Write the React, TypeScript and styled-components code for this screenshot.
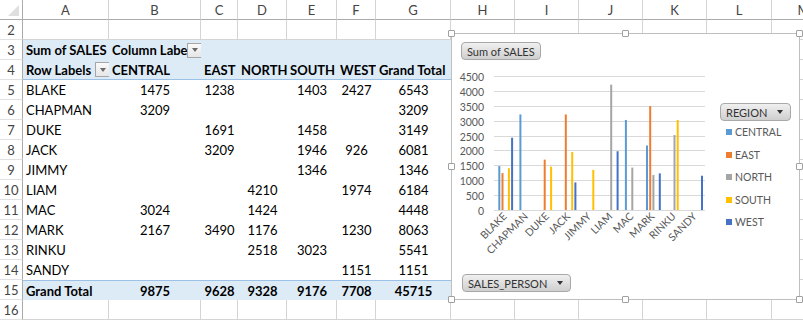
import React from 'react';
import styled, { createGlobalStyle, css } from 'styled-components';

const COLS = ['A', 'B', 'C', 'D', 'E', 'F', 'G', 'H', 'I', 'J', 'K', 'L', 'M'];

const SERIES = [
  { key: 'CENTRAL', color: '#5b9bd5' },
  { key: 'EAST', color: '#ed7d31' },
  { key: 'NORTH', color: '#a5a5a5' },
  { key: 'SOUTH', color: '#ffc000' },
  { key: 'WEST', color: '#4472c4' },
];

type Person = { name: string; v: (number | null)[] };

const DATA: Person[] = [
  { name: 'BLAKE', v: [1475, 1238, null, 1403, 2427] },
  { name: 'CHAPMAN', v: [3209, null, null, null, null] },
  { name: 'DUKE', v: [null, 1691, null, 1458, null] },
  { name: 'JACK', v: [null, 3209, null, 1946, 926] },
  { name: 'JIMMY', v: [null, null, null, 1346, null] },
  { name: 'LIAM', v: [null, null, 4210, null, 1974] },
  { name: 'MAC', v: [3024, null, 1424, null, null] },
  { name: 'MARK', v: [2167, 3490, 1176, null, 1230] },
  { name: 'RINKU', v: [null, null, 2518, 3023, null] },
  { name: 'SANDY', v: [null, null, null, null, 1151] },
];

const sum = (xs: (number | null)[]) => xs.reduce<number>((a, b) => a + (b ?? 0), 0);
const colTotals = SERIES.map((_, j) => sum(DATA.map((d) => d.v[j])));
const grandTotal = sum(colTotals);

const GlobalStyle = createGlobalStyle`
  body {
    margin: 0;
    background: #fff;
    font-family: Lato, "Liberation Sans", sans-serif;
  }
`;

const Sheet = styled.div`
  position: relative;
  width: 803px;
  height: 320px;
  overflow: hidden;
  display: grid;
  grid-template-columns: 23px 86px 92px 37px 49px 50px 39px 75px 64px 64px 64px 64px 65px 64px;
  grid-auto-rows: 20px;
  background: #fff;
`;

const Corner = styled.div`
  position: relative;
  box-sizing: border-box;
  border-right: 1px solid #ababab;
  border-bottom: 1px solid #ababab;

  &::after {
    content: '';
    position: absolute;
    right: 3px;
    bottom: 3px;
    border-left: 11px solid transparent;
    border-bottom: 11px solid #dfdfdf;
  }
`;

const ColHead = styled.div`
  box-sizing: border-box;
  display: flex;
  align-items: center;
  justify-content: center;
  font-size: 13px;
  color: #444;
  border-right: 1px solid #d4d4d4;
  border-bottom: 1px solid #ababab;
`;

const RowHead = styled.div`
  box-sizing: border-box;
  display: flex;
  align-items: center;
  justify-content: center;
  font-size: 13px;
  color: #444;
  border-right: 1px solid #ababab;
  border-bottom: 1px solid #e1e1e1;
`;

type Band = 'head' | 'rule' | 'total' | 'plain';

const Cell = styled.div<{ $pivot?: boolean; $band?: Band; $bold?: boolean; $center?: boolean }>`
  box-sizing: border-box;
  display: flex;
  align-items: center;
  padding: 0 3px;
  font-size: 13px;
  color: #000;
  white-space: nowrap;
  overflow: hidden;
  border-right: 1px solid #d4d4d4;
  border-bottom: 1px solid #d4d4d4;
  font-weight: ${(p) => (p.$bold ? 700 : 400)};
  justify-content: ${(p) => (p.$center ? 'center' : 'flex-start')};

  ${(p) =>
    p.$pivot &&
    css`
      border: none;
    `}
  ${(p) =>
    (p.$band === 'head' || p.$band === 'rule') &&
    css`
      background: #ddebf7;
    `}
  ${(p) =>
    p.$band === 'rule' &&
    css`
      border-bottom: 1px solid #9bc2e6;
    `}
  ${(p) =>
    p.$band === 'total' &&
    css`
      background: #ddebf7;
      border-top: 1px solid #9bc2e6;
    `}
`;

const Label = styled.span`
  flex: 1;
  overflow: hidden;
`;

const DropBtn = styled.span`
  flex: none;
  width: 15px;
  height: 15px;
  margin-right: -2px;
  box-sizing: border-box;
  border: 1px solid #a6a6a6;
  background: linear-gradient(#fafafa, #e6e6e6);
  display: flex;
  align-items: center;
  justify-content: center;

  &::after {
    content: '';
    border-left: 3.5px solid transparent;
    border-right: 3.5px solid transparent;
    border-top: 4px solid #6a6a6a;
  }
`;

/* ---------- chart ---------- */

const Chart = styled.div`
  position: absolute;
  left: 451px;
  top: 33px;
  width: 349px;
  height: 267px;
  box-sizing: border-box;
  border: 1px solid #bfbfbf;
  background: #fff;
  display: flex;
  padding: 8px 0 0 9px;
`;

const Handle = styled.span<{ $x: 'l' | 'c' | 'r'; $y: 't' | 'm' | 'b' }>`
  position: absolute;
  width: 7px;
  height: 7px;
  box-sizing: border-box;
  border: 1px solid #a0a0a0;
  border-radius: 1px;
  background: #fff;
  ${(p) => (p.$x === 'l' ? 'left: -4px;' : p.$x === 'r' ? 'right: -4px;' : 'left: calc(50% - 4px);')}
  ${(p) => (p.$y === 't' ? 'top: -4px;' : p.$y === 'b' ? 'bottom: -4px;' : 'top: calc(50% - 4px);')}
`;

const MainCol = styled.div`
  width: 255px;
  display: flex;
  flex-direction: column;
  align-items: flex-start;
`;

const FieldButton = styled.div<{ $drop?: boolean; $offset?: number }>`
  box-sizing: border-box;
  height: 18px;
  display: flex;
  align-items: center;
  gap: 10px;
  padding: 0 ${(p) => (p.$drop ? 7 : 5)}px 0 5px;
  margin-left: ${(p) => p.$offset ?? 0}px;
  border: 1px solid #a8a8a8;
  border-radius: 4px;
  background: linear-gradient(#f0f0f0, #cfcfcf);
  font-size: 11px;
  color: #333;
  white-space: nowrap;
`;

const Caret = styled.span`
  border-left: 3.5px solid transparent;
  border-right: 3.5px solid transparent;
  border-top: 4px solid #333;
`;

const Plot = styled.svg`
  display: block;
  margin-top: 6px;
  font-family: Lato, "Liberation Sans", sans-serif;
  overflow: visible;
`;

const BottomRow = styled.div`
  margin-top: 8px;
`;

const Legend = styled.div`
  margin: 61px 0 0 4px;
  display: flex;
  flex-direction: column;
  align-items: flex-start;
`;

const LegendItem = styled.div`
  height: 22.5px;
  display: flex;
  align-items: center;
  font-size: 10.5px;
  color: #595959;

  &:first-of-type {
    margin-top: -1px;
  }
`;

const Swatch = styled.span<{ $color: string }>`
  width: 6px;
  height: 6px;
  margin: 0 3px 0 6px;
  background: ${(p) => p.$color};
`;

const X0 = 494;
const X1 = 705;
const Y0 = 210;
const YTOP = 76;
const MAX = 4500;
const yOf = (v: number) => Y0 - (v * (Y0 - YTOP)) / MAX;
const catW = (X1 - X0) / DATA.length;

const PlotArea = () => (
  <Plot width={255} height={200} viewBox="0 0 255 200">
    <g transform="translate(-461,-66)">
      {Array.from({ length: 10 }, (_, k) => k * 500).map((v) => {
        const y = Math.round(yOf(v)) + 0.5;
        return (
          <g key={v}>
            <line x1={X0} x2={X1} y1={y} y2={y} stroke="#d9d9d9" strokeWidth={1} />
            <text x={484} y={y + 4} textAnchor="end" fontSize={10.5} fill="#595959">
              {v}
            </text>
          </g>
        );
      })}
      {DATA.map((d, i) =>
        d.v.map((v, j) =>
          v == null ? null : (
            <rect
              key={`${d.name}-${j}`}
              x={X0 + i * catW + 4.3 + j * 3.2}
              y={yOf(v)}
              width={2}
              height={Y0 - yOf(v)}
              fill={SERIES[j].color}
            />
          ),
        ),
      )}
      {DATA.map((d, i) => {
        const cx = X0 + i * catW + catW / 2;
        return (
          <text
            key={d.name}
            transform={`translate(${cx + 3},${Y0 + 7}) rotate(-45)`}
            textAnchor="end"
            fontSize={10.5}
            fill="#595959"
          >
            {d.name}
          </text>
        );
      })}
    </g>
  </Plot>
);

const PivotChart = () => (
  <Chart>
    {(['l', 'c', 'r'] as const).map((x) =>
      (['t', 'm', 'b'] as const).map((y) =>
        x === 'c' && y === 'm' ? null : <Handle key={x + y} $x={x} $y={y} />,
      ),
    )}
    <MainCol>
      <FieldButton>Sum of SALES</FieldButton>
      <PlotArea />
      <BottomRow>
        <FieldButton $drop $offset={1}>
          SALES_PERSON
          <Caret />
        </FieldButton>
      </BottomRow>
    </MainCol>
    <Legend>
      <FieldButton $drop>
        REGION
        <Caret />
      </FieldButton>
      {SERIES.map((s) => (
        <LegendItem key={s.key}>
          <Swatch $color={s.color} />
          {s.key}
        </LegendItem>
      ))}
    </Legend>
  </Chart>
);

/* ---------- sheet ---------- */

const plainCells = (from: number, key: string) =>
  COLS.slice(from).map((c) => <Cell key={`${key}${c}`} />);

const App = () => {
  const fmt = (v: number | null) => (v == null ? '' : String(v));

  return (
    <>
      <GlobalStyle />
      <Sheet>
        <Corner />
        {COLS.map((c) => (
          <ColHead key={c}>{c}</ColHead>
        ))}

        <RowHead>2</RowHead>
        {plainCells(0, 'r2')}

        <RowHead>3</RowHead>
        <Cell $pivot $band="head" $bold>
          Sum of SALES
        </Cell>
        <Cell $pivot $band="head" $bold style={{ paddingRight: 1 }}>
          <Label>Column Labels</Label>
          <DropBtn />
        </Cell>
        {[0, 1, 2, 3, 4].map((k) => (
          <Cell key={k} $pivot $band="head" />
        ))}
        {plainCells(7, 'r3')}

        <RowHead>4</RowHead>
        <Cell $pivot $band="rule" $bold style={{ paddingRight: 1 }}>
          <Label>Row Labels</Label>
          <DropBtn />
        </Cell>
        {SERIES.map((s) => (
          <Cell key={s.key} $pivot $band="rule" $bold>
            {s.key}
          </Cell>
        ))}
        <Cell $pivot $band="rule" $bold>
          Grand Total
        </Cell>
        {plainCells(7, 'r4')}

        {DATA.map((d, i) => (
          <React.Fragment key={d.name}>
            <RowHead>{i + 5}</RowHead>
            <Cell $pivot>{d.name}</Cell>
            {d.v.map((v, j) => (
              <Cell key={j} $pivot $center>
                {fmt(v)}
              </Cell>
            ))}
            <Cell $pivot $center>
              {sum(d.v)}
            </Cell>
            {plainCells(7, `r${i + 5}`)}
          </React.Fragment>
        ))}

        <RowHead>15</RowHead>
        <Cell $pivot $band="total" $bold>
          Grand Total
        </Cell>
        {colTotals.map((t, j) => (
          <Cell key={j} $pivot $band="total" $bold $center>
            {t}
          </Cell>
        ))}
        <Cell $pivot $band="total" $bold $center>
          {grandTotal}
        </Cell>
        {plainCells(7, 'r15')}

        <RowHead>16</RowHead>
        {plainCells(0, 'r16')}

        <PivotChart />
      </Sheet>
    </>
  );
};

export default App;
